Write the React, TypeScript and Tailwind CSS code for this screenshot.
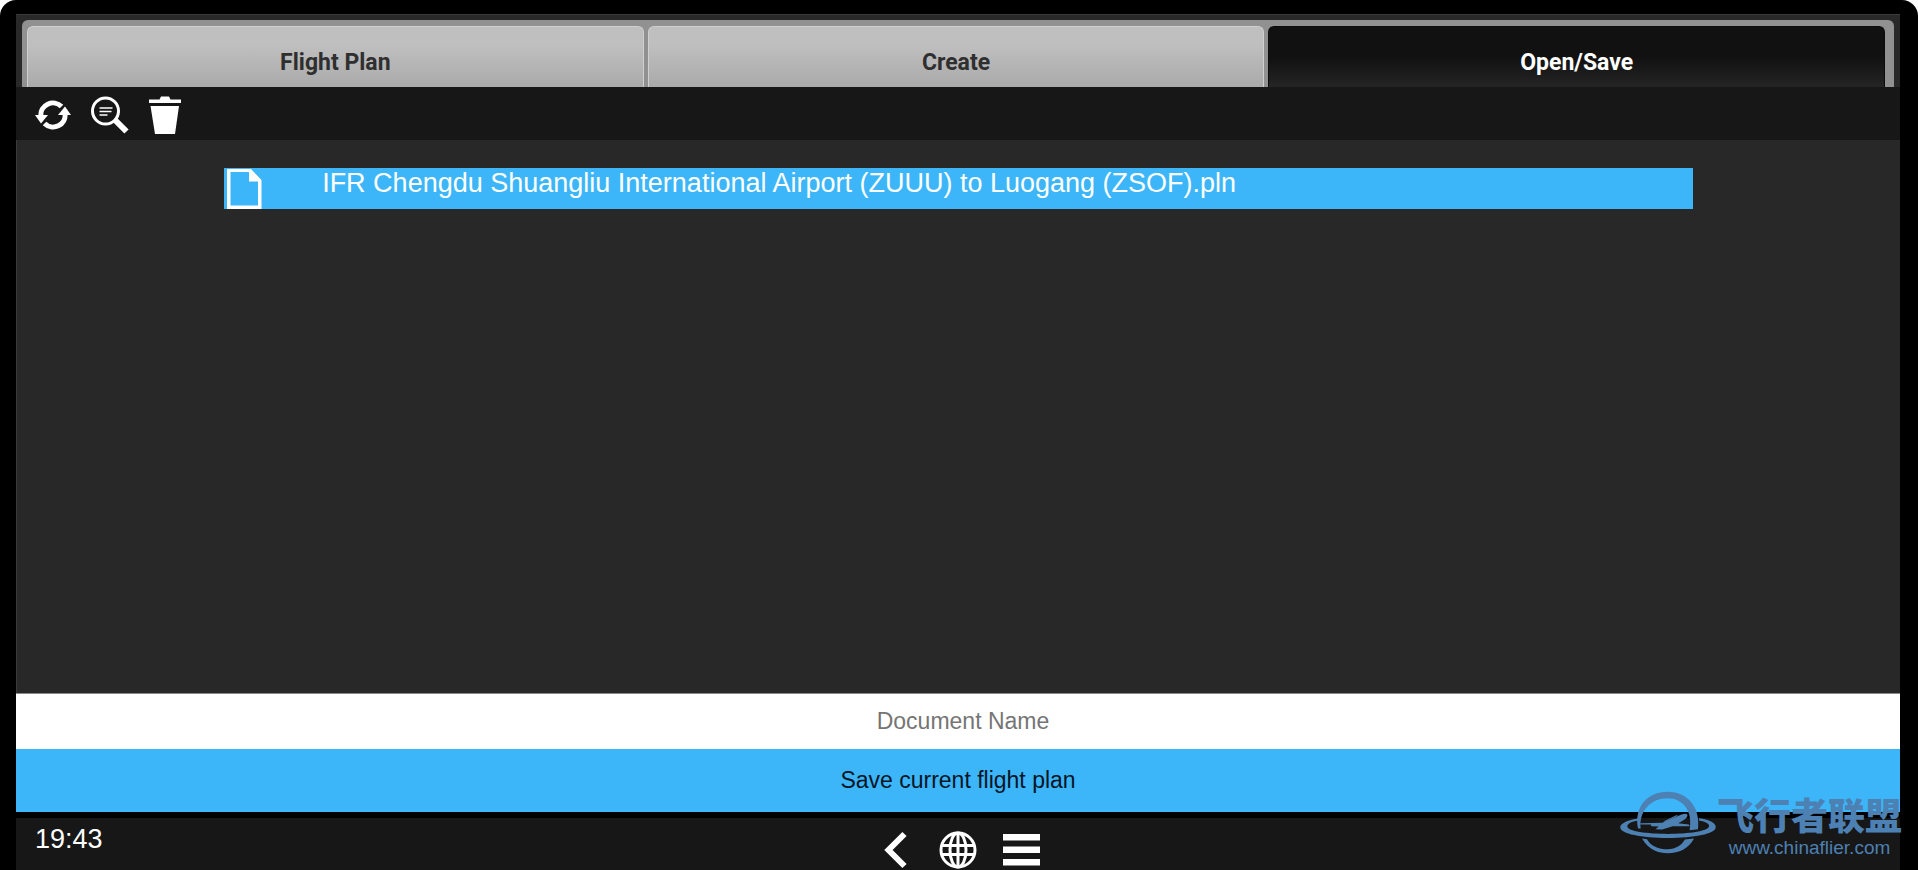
import React, { useState } from 'react';

const tabs = ['Flight Plan', 'Create', 'Open/Save'];

const files = ['IFR Chengdu Shuangliu International Airport (ZUUU) to Luogang (ZSOF).pln'];

const RefreshIcon = () => (
  <svg viewBox="0 0 36 30" className="block w-9 h-[30px]" fill="none">
    <path d="M6 16A12 11.500 0 0 1 26.500 6.500" stroke="#fff" strokeWidth="5" />
    <path d="M30 14A12 11.500 0 0 1 9.500 23.500" stroke="#fff" strokeWidth="5" />
    <path d="M0 15h13L6 23.500z" fill="#fff" />
    <path d="M23 15h13L30 6.500z" fill="#fff" />
  </svg>
);

const SearchFileIcon = () => (
  <svg viewBox="0 0 38 38" className="block w-[38px] h-[38px]" fill="none" stroke="#fff">
    <circle cx="14.500" cy="15" r="13" strokeWidth="3" />
    <path d="M24 24l11.500 11.500" strokeWidth="6" />
    <path d="M8.500 12h13M8.500 15.500h12M8.500 19h8" strokeWidth="1.400" />
  </svg>
);

const TrashIcon = () => (
  <svg viewBox="0 0 32 38" className="block w-8 h-[38px]" fill="#fff">
    <path d="M0 3.500h10.500L12 .5h8l1.500 3H32V7H0z" />
    <path d="M1.500 10h28.500L26 38H6z" />
  </svg>
);

const FileIcon = () => (
  <svg viewBox="0 0 36 41" className="w-9 h-[41px] shrink-0" fill="#fff">
    <path fillRule="evenodd" d="M0 1h24l10.500 11v29H0zM3.500 4v33.500H31V13.500h-9V4z" />
  </svg>
);

const BackIcon = () => (
  <svg viewBox="0 0 30 38" className="block w-[30px] h-[38px]" fill="none" stroke="#fff" strokeWidth="6">
    <path d="M21.500 3L5.500 19l16 16" />
  </svg>
);

const GlobeIcon = () => (
  <svg viewBox="0 0 38 38" className="block w-[38px] h-[38px]" fill="none" stroke="#fff" strokeWidth="3">
    <circle cx="19" cy="19" r="17" />
    <ellipse cx="19" cy="19" rx="8" ry="17" />
    <path d="M19 2v34M3 14.500h32M3 23.500h32" />
  </svg>
);

const MenuIcon = () => (
  <svg viewBox="0 0 38 38" className="block w-[38px] h-[38px]" fill="#fff">
    <path d="M0 3h37v6.500H0zM0 15.500h37V22H0zM0 28h37v6.500H0z" />
  </svg>
);

const Watermark = () => (
  <div className="absolute right-4 bottom-3 flex items-start gap-px text-[#4d80b3] pointer-events-none">
    <svg viewBox="15 18 285 188" className="w-24 h-[63px]" fill="currentColor">
      <path d="M68 130C56 65 95 20 157 20c62 0 98 50 90 112l-25 3C232 80 205 40 155 40c-45 0-85 35-79 90z" />
      <path d="M68 100C30 106 15 117 15 126c0 20 65 32 142 32s143-12 143-32c0-14-20-23-50-27v7c20 3 32 10 30 18-5 14-60 22-123 22S38 138 36 124c0-9 14-15 32-17z" />
      <path d="M80 160c20 35 50 44 77 44 33 0 63-14 78-44l-27 3c-13 22-33 29-51 29-27 0-52-10-62-30z" />
      <path d="M75 114l65-1 58-25c14-5 22-1 15 9-4 6-13 11-25 17l32 4 2 5h-50l-32 10-20-1 10-8-22-1-2-5H75z" />
      <path d="M144 109l38-19 6 1-38 19z" />
    </svg>
    <div className="flex flex-col items-center pt-[6px]">
      <span className="text-[37px] leading-[41px] font-black font-['Liberation_Sans','Noto_Sans_CJK_SC',sans-serif]">飞行者联盟</span>
      <span className="text-[19px] leading-5">www.chinaflier.com</span>
    </div>
  </div>
);

export default function App() {
  const [active, setActive] = useState(2);
  const [name, setName] = useState('');

  return (
    <div className="bg-white">
      <div className="relative min-h-screen flex flex-col bg-black rounded-t-[16px] pl-4 pt-[14px] pr-[18px] font-['Liberation_Sans',Arial,sans-serif]">
        {/* Tabs */}
        <div className="bg-[#292929] border-t border-[#3a3a3a] px-[6px] pt-[5px]">
          <div role="tablist" className="flex gap-1 bg-[#919191] rounded-t-md pl-[5px] pr-[9px] pt-[6px]">
            {tabs.map((tab, i) => (
              <button
                key={tab}
                role="tab"
                aria-selected={i === active}
                onClick={() => setActive(i)}
                className={`flex-1 h-[61px] rounded-t-md border-t border-x text-[23px] font-bold font-['Roboto',sans-serif] ${
                  i === active
                    ? 'bg-linear-to-b from-[#111111] from-50% to-[#252525] border-[#0c0c0c] text-white'
                    : 'bg-linear-to-b from-[#bfbfbf] from-30% to-[#aaaaaa] border-[#d0d0d0] text-[#2f2f2f]'
                }`}
              >
                <span className="block pt-3">{tab}</span>
              </button>
            ))}
          </div>
        </div>

        {/* Toolbar */}
        <div className="flex items-center gap-5 h-[53px] px-[19px] pt-[3px] bg-[#171717]">
          <button aria-label="Refresh"><RefreshIcon /></button>
          <button aria-label="Preview"><SearchFileIcon /></button>
          <button aria-label="Delete"><TrashIcon /></button>
        </div>

        {/* File list */}
        <div className="flex-1 bg-[#282828] border-l border-[#3a3a3a] pt-7">
          <ul className="w-[78%] mx-auto">
            {files.map((file) => (
              <li key={file}>
                <button className="flex w-full gap-[59px] pl-[3px] bg-[#3cb6f8] text-left text-white">
                  <FileIcon />
                  <span className="text-[27px] leading-[30px]">{file}</span>
                </button>
              </li>
            ))}
          </ul>
        </div>

        {/* Save form */}
        <form className="flex flex-col" onSubmit={(e) => e.preventDefault()}>
          <input
            type="text"
            aria-label="Document Name"
            placeholder="Document Name"
            value={name}
            onChange={(e) => setName(e.target.value)}
            className="h-14 pl-[10px] bg-white text-center text-[23px] text-black placeholder:text-[#757575] border-t border-[#8a8a8a]"
          />
          <button type="submit" className="h-[63px] bg-[#3cb6f8] text-[23px] text-[#051525]">
            Save current flight plan
          </button>
        </form>

        {/* Status bar */}
        <footer className="grid grid-cols-3 h-[52px] mt-[6px] bg-[#171717] text-white">
          <time className="pl-[19px] pt-[6px] text-[27px] leading-[30px]">19:43</time>
          <nav className="flex justify-center items-end pl-2 gap-[26px] pb-px">
            <button aria-label="Back"><BackIcon /></button>
            <button aria-label="World map"><GlobeIcon /></button>
            <button aria-label="Menu"><MenuIcon /></button>
          </nav>
        </footer>

        <Watermark />
      </div>
    </div>
  );
}
